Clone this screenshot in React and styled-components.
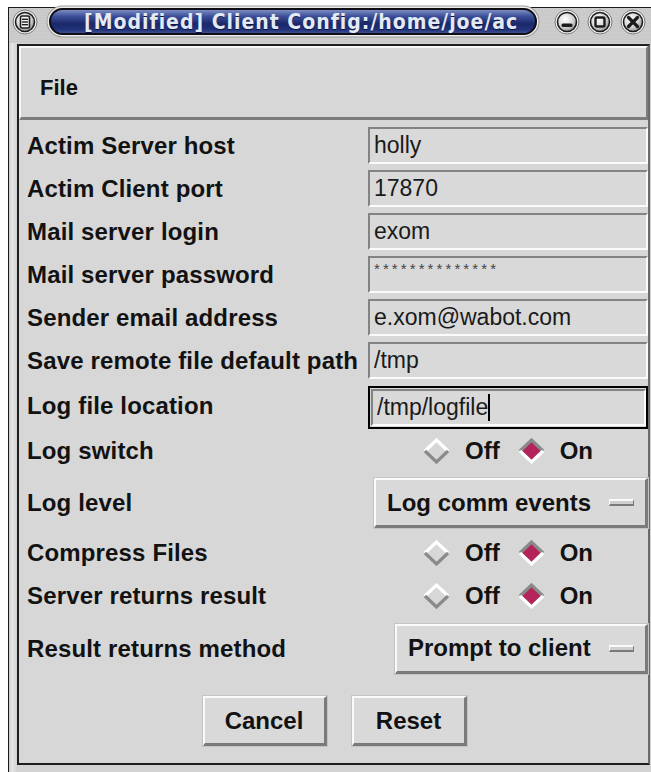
import React from 'react';
import styled, { createGlobalStyle } from 'styled-components';

const GlobalStyle = createGlobalStyle`
  html, body {
    margin: 0;
    padding: 0;
    background: #ffffff;
    overflow: hidden;
  }
`;

const FONT = `"Liberation Sans", Arial, Helvetica, sans-serif`;

const Screen = styled.div`
  width: 651px;
  height: 772px;
  overflow: hidden;
  box-sizing: border-box;
  padding: 7px 0 0 8px;
  font-family: ${FONT};
`;

const Window = styled.div`
  width: 650px;
  height: 765px;
  box-sizing: border-box;
  border-left: 1px solid #1a1a1a;
  border-top: 1px solid #1a1a1a;
  background: linear-gradient(90deg, #c9c9c9 0px, #e6e6e6 3px, #d2d2d2 8px);
  display: flex;
  flex-direction: column;
  padding: 0 0 7px 8px;
`;

const TitleBar = styled.div`
  height: 35px;
  box-sizing: border-box;
  margin-left: -8px;
  display: flex;
  align-items: flex-start;
  padding: 0 0 0 3px;
  background: repeating-linear-gradient(
    180deg,
    #cdcdcd 0px,
    #cdcdcd 1px,
    #c3c3c3 2px
  );
`;

const Knob = styled.div`
  margin-top: 1px;
  display: flex;
`;

const Pill = styled.div`
  width: 488px;
  height: 27px;
  margin: 0 0 0 11px;
  box-sizing: border-box;
  border: 2px solid #0e0e14;
  border-radius: 14px;
  box-shadow: 0 0 0 1.5px #ececec, 0 0 0 2.5px #9a9a9a;
  background: linear-gradient(
    180deg,
    #7c8dc2 0%,
    #3b4e98 28%,
    #1a2868 60%,
    #22327a 85%,
    #3c4d92 100%
  );
  display: flex;
  align-items: center;
  padding-left: 33px;
  overflow: hidden;
  white-space: nowrap;
`;

const TitleText = styled.span`
  font-family: "DejaVu Sans Condensed", "DejaVu Sans", sans-serif;
  font-weight: bold;
  font-size: 21px;
  color: #e4e9f6;
  letter-spacing: 1px;
  text-shadow: 0 1px 0 #0c1440;
`;

const Controls = styled.div`
  display: flex;
  gap: 7px;
  margin-left: 17px;
`;

const Client = styled.div`
  flex: 1;
  margin-top: 1px;
  border: 2px solid #1e1e1e;
  border-right-color: #6a6a6a;
  background: #d7d7d7;
  display: flex;
  flex-direction: column;
  width: 629px;
`;

const MenuBar = styled.div`
  height: 74px;
  box-sizing: border-box;
  border-top: 2px solid #f6f6f6;
  border-left: 2px solid #f6f6f6;
  border-bottom: 3px solid #7c7c7c;
  border-right: 2px solid #7c7c7c;
  display: flex;
  align-items: center;
  padding: 10px 0 0 19px;
  font-weight: bold;
  font-size: 22px;
  color: #111;
`;

const Form = styled.div`
  display: flex;
  flex-direction: column;
  padding: 4px 0 0 8px;
`;

const Row = styled.div`
  height: ${(p) => p.h}px;
  display: flex;
  align-items: center;
`;

const Label = styled.div`
  width: 339px;
  font-weight: bold;
  font-size: 24px;
  color: #121212;
  white-space: nowrap;
  letter-spacing: 0.15px;
`;

const Cell = styled.div`
  flex: 1;
  display: flex;
  justify-content: ${(p) => p.justify || 'flex-start'};
  align-self: ${(p) => p.align || 'center'};
  padding-left: 2px;
`;

const Entry = styled.div`
  width: 100%;
  height: 37px;
  box-sizing: border-box;
  border-top: 2px solid #838383;
  border-left: 2px solid #838383;
  border-bottom: 2px solid #fbfbfb;
  border-right: 2px solid #fbfbfb;
  background: #d9d9d9;
  display: flex;
  align-items: ${(p) => (p.secret ? 'flex-start' : 'center')};
  padding-left: 4px;
  font-size: 23px;
  color: #1a1a1a;
  white-space: nowrap;
`;

const Secret = styled.span`
  font-size: 15px;
  letter-spacing: 3.1px;
  color: #444;
  margin-top: 2px;
`;

const Focus = styled.div`
  width: 100%;
  border: 2px solid #000;
  padding: 1px 0 1px 1px;
  box-sizing: border-box;
`;

const Caret = styled.span`
  display: inline-block;
  width: 2px;
  height: 27px;
  background: #000;
`;

const RadioGroup = styled.div`
  display: flex;
  align-items: center;
  margin-left: 55px;
`;

const RadioItem = styled.label`
  display: flex;
  align-items: center;
  gap: 15px;
  margin-right: ${(p) => (p.last ? 0 : 18)}px;
  font-weight: bold;
  font-size: 24px;
  color: #121212;
`;

const Raised = styled.div`
  box-sizing: border-box;
  height: 50px;
  background: #d9d9d9;
  border-top: 2px solid #fafafa;
  border-left: 2px solid #fafafa;
  border-bottom: 3px solid #7a7a7a;
  border-right: 3px solid #7a7a7a;
  box-shadow: 0 0 0 1px #c4c4c4;
  display: flex;
  align-items: center;
  font-weight: bold;
  font-size: 24px;
  color: #121212;
  white-space: nowrap;
`;

const OptionMenu = styled(Raised)`
  width: ${(p) => p.w}px;
  padding: 0 11px 0 11px;
  justify-content: space-between;
`;

const Indicator = styled.span`
  width: 25px;
  height: 7px;
  box-sizing: border-box;
  border-top: 2px solid #fafafa;
  border-left: 1px solid #fafafa;
  border-bottom: 2px solid #7a7a7a;
  border-right: 1px solid #7a7a7a;
  background: #cfcfcf;
`;

const ButtonRow = styled.div`
  display: flex;
  justify-content: center;
  gap: 25px;
  margin-top: 19px;
  padding-left: 2px;
`;

const Button = styled(Raised)`
  width: ${(p) => p.w}px;
  justify-content: center;
`;

function RoundButton({ children }) {
  return (
    <Knob>
      <svg width="26" height="26" viewBox="0 0 26 26">
        <defs>
          <radialGradient id="knob" cx="40%" cy="35%" r="70%">
            <stop offset="0%" stopColor="#ffffff" />
            <stop offset="60%" stopColor="#d4d4d4" />
            <stop offset="100%" stopColor="#8c8c8c" />
          </radialGradient>
        </defs>
        <circle cx="13" cy="13" r="12" fill="#f2f2f2" stroke="#7a7a7a" strokeWidth="1" />
        <circle cx="13" cy="13" r="9.5" fill="url(#knob)" stroke="#1c1c1c" strokeWidth="1.6" />
        {children}
      </svg>
    </Knob>
  );
}

function Diamond({ on }) {
  const top = on ? '#8a8a8a' : '#ffffff';
  const bottom = on ? '#ffffff' : '#8a8a8a';
  return (
    <svg width="27" height="26" viewBox="0 0 27 26">
      <polygon points="13.5,2 25,13 13.5,24 2,13" fill={on ? '#b3245b' : '#d7d7d7'} />
      <polyline points="2,13 13.5,2 25,13" fill="none" stroke={top} strokeWidth="3.2" />
      <polyline points="2,13 13.5,24 25,13" fill="none" stroke={bottom} strokeWidth="3.2" />
    </svg>
  );
}

function Radio({ value }) {
  return (
    <RadioGroup>
      <RadioItem>
        <Diamond on={!value} />
        Off
      </RadioItem>
      <RadioItem last>
        <Diamond on={value} />
        On
      </RadioItem>
    </RadioGroup>
  );
}

const entries = [
  ['Actim Server host', 'holly'],
  ['Actim Client port', '17870'],
  ['Mail server login', 'exom'],
  ['Mail server password', null],
  ['Sender email address', 'e.xom@wabot.com'],
  ['Save remote file default path', '/tmp'],
];

export default function App() {
  return (
    <Screen>
      <GlobalStyle />
      <Window>
        <TitleBar>
          <RoundButton>
            <rect x="8.5" y="7" width="9" height="12" rx="1.5" fill="#f4f4f4" stroke="#1c1c1c" strokeWidth="1.6" />
            <line x1="10" y1="10.3" x2="16" y2="10.3" stroke="#1c1c1c" strokeWidth="1.4" />
            <line x1="10" y1="13" x2="16" y2="13" stroke="#1c1c1c" strokeWidth="1.4" />
            <line x1="10" y1="15.7" x2="16" y2="15.7" stroke="#1c1c1c" strokeWidth="1.4" />
          </RoundButton>
          <Pill>
            <TitleText>[Modified] Client Config:/home/joe/ac</TitleText>
          </Pill>
          <Controls>
            <RoundButton>
              <rect x="7.5" y="14.5" width="11" height="3.5" rx="1.5" fill="#1c1c1c" />
            </RoundButton>
            <RoundButton>
              <rect x="8.5" y="8.5" width="9" height="9" rx="1.5" fill="none" stroke="#1c1c1c" strokeWidth="2.4" />
            </RoundButton>
            <RoundButton>
              <path d="M8.5 8.5 L17.5 17.5 M17.5 8.5 L8.5 17.5" stroke="#1c1c1c" strokeWidth="3.2" strokeLinecap="round" />
            </RoundButton>
          </Controls>
        </TitleBar>
        <Client>
          <MenuBar>File</MenuBar>
          <Form>
            {entries.map(([label, value]) => (
              <Row h={43} key={label}>
                <Label>{label}</Label>
                <Cell>
                  <Entry secret={value === null}>
                    {value === null ? <Secret>**************</Secret> : value}
                  </Entry>
                </Cell>
              </Row>
            ))}
            <Row h={47}>
              <Label>Log file location</Label>
              <Cell align="flex-end">
                <Focus>
                  <Entry>
                    /tmp/logfile
                    <Caret />
                  </Entry>
                </Focus>
              </Cell>
            </Row>
            <Row h={43}>
              <Label>Log switch</Label>
              <Cell>
                <Radio value />
              </Cell>
            </Row>
            <Row h={62}>
              <Label>Log level</Label>
              <Cell justify="flex-end">
                <OptionMenu w={274}>
                  Log comm events
                  <Indicator />
                </OptionMenu>
              </Cell>
            </Row>
            <Row h={38}>
              <Label>Compress Files</Label>
              <Cell>
                <Radio value />
              </Cell>
            </Row>
            <Row h={48}>
              <Label>Server returns result</Label>
              <Cell>
                <Radio value />
              </Cell>
            </Row>
            <Row h={57}>
              <Label>Result returns method</Label>
              <Cell justify="flex-end">
                <OptionMenu w={253}>
                  Prompt to client
                  <Indicator />
                </OptionMenu>
              </Cell>
            </Row>
          </Form>
          <ButtonRow>
            <Button w={124}>Cancel</Button>
            <Button w={115}>Reset</Button>
          </ButtonRow>
        </Client>
      </Window>
    </Screen>
  );
}
